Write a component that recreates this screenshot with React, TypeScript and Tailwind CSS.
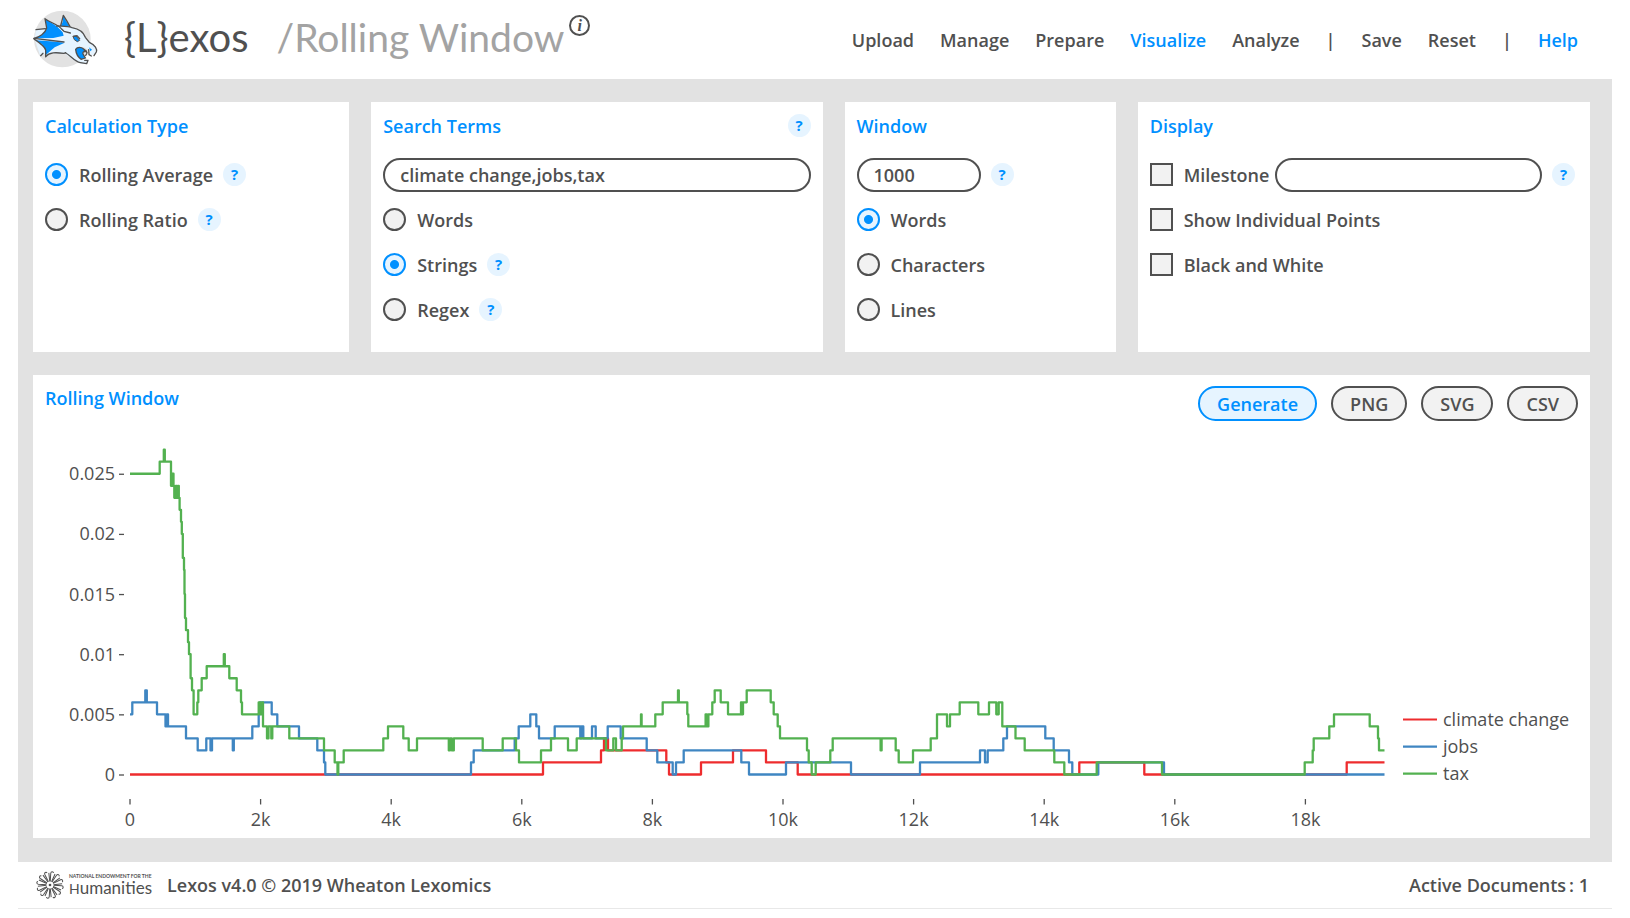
import type { ReactNode } from "react";

type Step = [x: number, level: number];

/* Each pair is [x, occurrences per 1000 words]; the line holds the level until the next pair. */
const climateChange: Step[] = [
  [130, 0], [543, 1], [601, 2], [604, 3], [608, 2], [666.3, 1], [669, 0], [701, 1], [733, 2],
  [766, 1], [797.7, 0], [1079.3, 1], [1144.3, 0], [1346.7, 1], [1384.5, 1],
];

const jobs: Step[] = [
  [130, 5], [132.3, 6], [145.3, 7], [146.8, 6], [157, 5], [165.5, 4], [166.8, 5], [168, 4],
  [186, 3], [197.7, 2], [206.3, 3], [210.5, 2], [212, 3], [232.8, 2], [233.8, 3], [252.3, 4],
  [258.7, 5], [260, 6], [271.7, 5], [277.3, 4], [299, 3], [317.3, 2], [324, 1], [325.3, 0],
  [471, 1], [473.7, 2], [514.7, 3], [518.7, 4], [530.3, 5], [536.3, 4], [539, 3], [554.7, 4],
  [580.3, 3], [581.5, 4], [583.3, 3], [592, 4], [595.7, 3], [607.7, 4], [620.7, 3], [646.7, 2],
  [657.3, 1], [672.7, 0], [676, 1], [683.7, 2], [741.3, 1], [749, 0], [786, 1], [851, 0],
  [920, 1], [980, 2], [985, 1], [987.7, 2], [1003.3, 3], [1007, 4], [1045.3, 3], [1053.7, 2],
  [1069, 1], [1072.3, 0], [1098.3, 1], [1164, 0], [1384.5, 0],
];

const tax: Step[] = [
  [130, 25], [159.7, 26], [163.8, 27], [164.8, 26], [171, 24], [172.3, 25], [173.5, 24],
  [174.3, 23], [175.8, 24], [177, 23], [178.2, 24], [178.8, 23], [179.6, 22], [181, 21],
  [181.8, 20], [182.8, 18], [184, 17], [184.5, 15], [185, 13], [186, 12], [188, 11], [189, 10],
  [190.6, 8], [192, 7], [193.6, 5], [197.3, 6], [198.3, 7], [201.7, 8], [206.7, 9],
  [223.8, 10], [224.8, 9], [229.3, 8], [236.7, 7], [241, 6], [242, 5], [258.7, 6], [260.5, 5],
  [262, 6], [263, 4], [267, 3], [268.5, 4], [271.3, 3], [272.3, 4], [289.3, 3], [324, 2],
  [334.7, 1], [337.5, 0], [338.3, 1], [343.7, 2], [383.3, 3], [388, 4], [403.3, 3], [408.7, 2],
  [417, 3], [448.8, 2], [450, 3], [451.8, 2], [453.8, 3], [482.7, 2], [502.7, 3], [516, 2],
  [519, 1], [541, 2], [551, 3], [568, 2], [576.7, 3], [606, 2], [613.3, 3], [616, 2],
  [621.7, 3], [623, 4], [641, 5], [641.6, 4], [655.3, 5], [662.7, 6], [678, 7], [678.8, 6],
  [687.3, 5], [688.3, 4], [705.6, 5], [707, 4], [708.4, 5], [712.3, 6], [714.7, 7], [720.7, 6],
  [728, 5], [741, 6], [742, 5], [743, 6], [746.7, 7], [770.7, 6], [773.7, 5], [777.7, 4],
  [780, 3], [807, 2], [808.7, 1], [811.7, 0], [815.7, 1], [830.3, 2], [832.7, 3], [880.6, 2],
  [881.6, 3], [895.7, 2], [898.7, 1], [913, 2], [930.7, 3], [937, 5], [947, 4], [950, 5],
  [959.7, 6], [978.3, 5], [989, 6], [996.3, 5], [998.7, 6], [1002.3, 4], [1015.5, 3],
  [1024.7, 2], [1054.3, 1], [1064.3, 0], [1096.7, 1], [1162, 0], [1304.7, 1], [1312.7, 2],
  [1313.7, 3], [1329.3, 4], [1334, 5], [1369.7, 4], [1378, 3], [1379, 2], [1384.5, 2],
];

const series = [
  { name: "climate change", color: "#ee2c2e", steps: climateChange },
  { name: "jobs", color: "#3f86c2", steps: jobs },
  { name: "tax", color: "#53b150", steps: tax },
];

const levelY = (level: number) => 774.5 - level * 12.03;

const stepPath = (steps: Step[]) =>
  steps
    .map(([x, level], i) => (i === 0 ? `M${x} ${levelY(level)}` : `H${x}V${levelY(level)}`))
    .join("");

const yTicks = [0, 5, 10, 15, 20, 25];
const xTicks = [0, 2, 4, 6, 8, 10, 12, 14, 16, 18];

function Chart() {
  return (
    <svg viewBox="33 425 1557 413" className="block w-full" role="img" aria-label="Rolling window graph">
      <g className="fill-[#505050] font-['Open_Sans',sans-serif] text-[18px] font-normal">
        {yTicks.map((t) => (
          <g key={t}>
            <text x="115" y={levelY(t) + 6.5} textAnchor="end">{t / 1000}</text>
            <path d={`M119 ${levelY(t) + 0.5}h5`} stroke="#505050" strokeWidth="1.3" />
          </g>
        ))}
        {xTicks.map((t) => (
          <g key={t}>
            <text x={130 + t * 65.3} y="826" textAnchor="middle">{t === 0 ? "0" : `${t}k`}</text>
            <path d={`M${130 + t * 65.3} 799v5.500`} stroke="#505050" strokeWidth="1.3" />
          </g>
        ))}
        {series.map((s, i) => (
          <g key={s.name}>
            <path d={`M1403 ${719.5 + i * 27.1}h34`} stroke={s.color} strokeWidth="2.2" />
            <text x="1443" y={726 + i * 27.1}>{s.name}</text>
          </g>
        ))}
      </g>
      {series.map((s) => (
        <path key={s.name} d={stepPath(s.steps)} fill="none" stroke={s.color} strokeWidth="2.3" strokeLinejoin="round" />
      ))}
    </svg>
  );
}

function DragonLogo() {
  return (
    <svg viewBox="0 0 270 225" className="h-[75px] w-[90px] shrink-0" aria-hidden="true">
      <circle cx="127" cy="117" r="85" fill="#e2e2e2" />
      <path
        d="M48 88 L76 89 L110 78 L130 80 L152 82 L176 90 L190 104 L205 126 L222 137 L229 150 L226 162 L214 166 L206 150 L190 141 L172 143 L168 156 L178 172 L204 181 L202 189 L186 192 L160 180 L136 162 L80 160 L60 166 L44 118 Z"
        fill="#e6f4ff"
      />
      <path d="M77 58 L94 68 L112 80 L128 97 L131 107 L100 114 L47 115 L66 104 L80 86 Z" fill="#0090ff" />
      <path d="M47 121 L90 124 L134 128 L104 142 L78 164 L76 146 L66 133 Z" fill="#0090ff" />
      <path d="M130 47 L138 62 L149 80 L122 78 L128 66 Z" fill="#0090ff" />
      <path d="M159 109 L168 108 L179 121 L172 125 L163 119 Z" fill="#0090ff" stroke="#505050" strokeWidth="3" />
      <path d="M167 148 C172 140 184 141 191 147 L198 155 C190 153 186 158 190 164 L196 174 L184 178 C172 170 168 160 167 148 Z" fill="#0090ff" stroke="#505050" strokeWidth="4" />
      <path d="M207 142 L216 149 L211 154 Z" fill="#0090ff" />
      <g fill="none" stroke="#505050" strokeWidth="4" strokeLinecap="round" strokeLinejoin="round">
        <path d="M48 89 L76 86" />
        <path d="M42 115 C58 112 76 100 80 84 L75 56 C92 69 112 72 124 86 L132 94 L151 99" />
        <path d="M42 115 L132 126" />
        <path d="M42 117 C58 128 74 138 77 150 L77 170" />
        <path d="M77 170 C88 156 108 157 132 160 L137 158" />
        <path d="M62 167 L69 160" />
        <path d="M122 77 L130 46 L140 62 L150 80" />
        <path d="M110 78 C130 79 142 77 156 83 C177 87 191 97 196 112 L208 127 C226 135 232 148 229 156 L222 167" />
        <path d="M206 149 L207 164 L214 168" />
        <path d="M193 150 C202 152 203 162 197 166" />
        <path d="M137 159 C150 165 164 185 181 188 L200 191 L204 181 L194 181" />
        <path d="M160 109 L171 107 L179 116" />
      </g>
    </svg>
  );
}

const petals = Array.from({ length: 12 }, (_, i) => i * 30);

function HumanitiesLogo() {
  return (
    <span className="flex items-center gap-[5px] text-[#505050]">
      <svg viewBox="-14 -14 28 28" className="size-7 shrink-0" aria-hidden="true">
        <circle r="1.300" fill="currentColor" />
        {petals.map((a) => (
          <path
            key={a}
            transform={`rotate(${a + 15})`}
            d="M-0.700 -3.500L-2.300 -11.500C-2.600 -13.500 -0.300 -14 0.300 -12.500M0.700 -3.500L2 -12"
            fill="none"
            stroke="currentColor"
            strokeWidth="1"
          />
        ))}
      </svg>
      <span className="flex flex-col whitespace-nowrap">
        <span className="font-['Lato',sans-serif] text-[5px] leading-[6px] font-bold">NATIONAL ENDOWMENT FOR THE</span>
        <span className="font-['Lato',sans-serif] text-[17px] leading-[17px] font-normal">
          <span className="text-[14px]">H</span>umanities
        </span>
      </span>
    </span>
  );
}

function Hint({ label }: { label: string }) {
  return (
    <button
      type="button"
      aria-label={label}
      className="flex size-[23px] shrink-0 items-center justify-center rounded-full bg-[#e6f4ff] text-[15px] leading-none font-bold text-[#0090ff]"
    >
      ?
    </button>
  );
}

function Card({ title, action, children }: { title: string; action?: ReactNode; children: ReactNode }) {
  return (
    <section className="bg-white px-3 pt-3 pb-5">
      <div className="mb-[14px] flex h-6 items-start justify-between">
        <h2 className="text-[#0090ff]">{title}</h2>
        {action}
      </div>
      {children}
    </section>
  );
}

function Option({ type, name, label, checked, hint, children }: {
  type: "radio" | "checkbox";
  name: string;
  label: string;
  checked?: boolean;
  hint?: boolean;
  children?: ReactNode;
}) {
  return (
    <div className="flex h-[45px] items-center">
      <label className="flex shrink-0 items-center gap-[11px]">
        {type === "radio" ? (
          <input
            type="radio"
            name={name}
            defaultChecked={checked}
            className="size-[23px] appearance-none rounded-full border-2 border-[#505050] bg-[#f2f2f2] checked:border-[#0090ff] checked:bg-[#e6f4ff] checked:bg-[radial-gradient(circle,#0090ff_4px,transparent_5px)]"
          />
        ) : (
          <input
            type="checkbox"
            name={name}
            className="size-[23px] appearance-none border-2 border-[#505050] bg-[#f2f2f2] checked:bg-[#0090ff]"
          />
        )}
        {label}
      </label>
      {children}
      {hint && (
        <span className="ml-[10px]">
          <Hint label={`About ${label}`} />
        </span>
      )}
    </div>
  );
}

const field = "h-[34px] rounded-full border-2 border-[#505050] bg-white px-[15px] outline-none";
const pill = "h-[35px] rounded-full border-2 px-[17px] leading-[30px]";

const links = ["Upload", "Manage", "Prepare", "Visualize", "Analyze", "|", "Save", "Reset", "|", "Help"];

export default function App() {
  return (
    <div className="min-h-screen bg-white font-['Open_Sans',sans-serif] text-[18px] leading-6 font-semibold text-[#505050]">
      <header className="flex h-[79px] items-center justify-between pr-[52px] pl-5">
        <div className="flex items-start self-start">
          <DragonLogo />
          <h1 className="mt-[13px] ml-[14px] flex items-baseline font-['Lato',sans-serif] text-[40px] leading-[48px] font-normal whitespace-nowrap">
            <span>{"{L}exos"}</span>
            <span className="ml-7 text-[39px] text-[#a3a3a3]">/Rolling Window</span>
          </h1>
          <button
            type="button"
            aria-label="About this tool"
            className="mt-[15px] ml-[5px] flex size-[21px] items-center justify-center rounded-full border-2 border-[#505050] font-['Liberation_Serif',serif] text-[16px] leading-none font-bold italic"
          >
            i
          </button>
        </div>
        <nav className="flex gap-[26px]">
          {links.map((item, i) =>
            item === "|" ? (
              <span key={i}>|</span>
            ) : (
              <a key={i} href="#" className={item === "Visualize" || item === "Help" ? "text-[#0090ff]" : ""}>
                {item}
              </a>
            ),
          )}
        </nav>
      </header>

      <main className="mx-[18px] flex flex-col gap-[23px] bg-[#e2e2e2] pt-[23px] pr-[22px] pb-6 pl-[15px]">
        <div className="grid grid-cols-[316fr_451fr_271fr_452fr] gap-[22px]">
          <Card title="Calculation Type">
            <Option type="radio" name="calculation" label="Rolling Average" checked hint />
            <Option type="radio" name="calculation" label="Rolling Ratio" hint />
          </Card>
          <Card title="Search Terms" action={<Hint label="About search terms" />}>
            <div className="flex h-[45px] items-center">
              <input aria-label="Search terms" defaultValue="climate change,jobs,tax" className={`${field} w-full`} />
            </div>
            <Option type="radio" name="terms" label="Words" />
            <Option type="radio" name="terms" label="Strings" checked hint />
            <Option type="radio" name="terms" label="Regex" hint />
          </Card>
          <Card title="Window">
            <div className="flex h-[45px] items-center gap-[10px]">
              <input aria-label="Window size" defaultValue="1000" className={`${field} w-[124px]`} />
              <Hint label="About window size" />
            </div>
            <Option type="radio" name="unit" label="Words" checked />
            <Option type="radio" name="unit" label="Characters" />
            <Option type="radio" name="unit" label="Lines" />
          </Card>
          <Card title="Display">
            <div className="pr-[3px]">
              <Option type="checkbox" name="milestone" label="Milestone" hint>
                <input aria-label="Milestone text" className={`${field} ml-[6px] w-0 min-w-0 flex-1`} />
              </Option>
            </div>
            <Option type="checkbox" name="points" label="Show Individual Points" />
            <Option type="checkbox" name="bw" label="Black and White" />
          </Card>
        </div>

        <section className="bg-white">
          <div className="flex h-[50px] items-start justify-between px-3 pt-[11px]">
            <h2 className="text-[#0090ff]">Rolling Window</h2>
            <div className="flex gap-[14px]">
              <button type="button" className={`${pill} border-[#0090ff] bg-[#e6f4ff] text-[#0090ff]`}>Generate</button>
              <button type="button" className={`${pill} border-[#505050] bg-[#f2f2f2]`}>PNG</button>
              <button type="button" className={`${pill} border-[#505050] bg-[#f2f2f2]`}>SVG</button>
              <button type="button" className={`${pill} border-[#505050] bg-[#f2f2f2]`}>CSV</button>
            </div>
          </div>
          <Chart />
        </section>
      </main>

      <footer className="mx-[18px] flex h-[47px] items-center justify-between border-b border-[#e8e8e8] pr-[23px] pl-[18px]">
        <div className="flex items-center gap-[15px]">
          <HumanitiesLogo />
          <span>Lexos v4.0 © 2019 Wheaton Lexomics</span>
        </div>
        <span>
          Active Documents<span className="ml-[3px]">: 1</span>
        </span>
      </footer>
    </div>
  );
}
